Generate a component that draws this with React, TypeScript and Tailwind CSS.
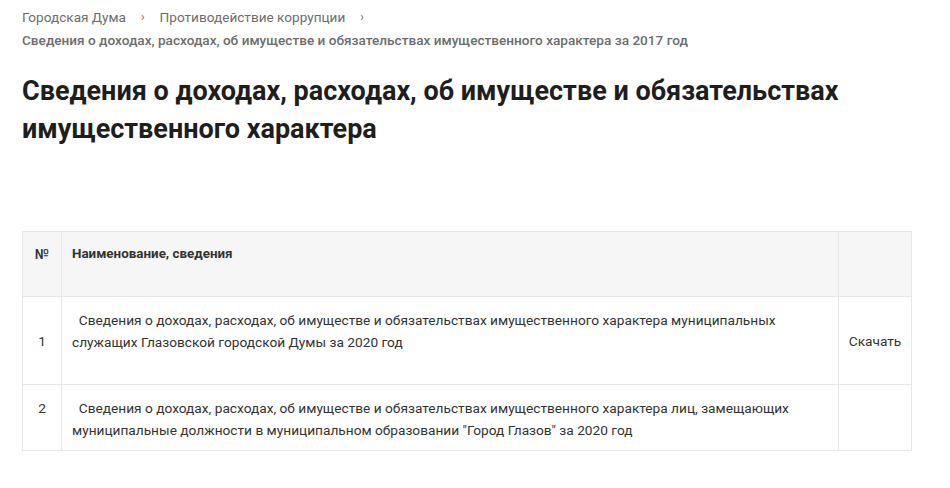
export default function App() {
  return (
    <div className="min-h-[488px] bg-white px-[22px] pt-[6px] text-[#333]" style={{ fontFamily: 'Roboto, "Noto Sans", sans-serif' }}>
      {/* Breadcrumbs */}
      <nav className="text-[13.6px] leading-[23px] text-[#6d6d6d]">
        <div className="flex items-center">
          <span>Городская Дума</span>
          <span className="mx-[15px] text-[12px]">›</span>
          <span>Противодействие коррупции</span>
          <span className="mx-[15px] text-[12px]">›</span>
        </div>
        <div className="font-medium">Сведения о доходах, расходах, об имуществе и обязательствах имущественного характера за 2017 год</div>
      </nav>

      <h1 className="mt-[20px] text-[27px] font-bold leading-[38px] text-[#1e1e1e]">
        Сведения о доходах, расходах, об имуществе и обязательствах
        <br />
        имущественного характера
      </h1>

      <table className="mt-[83px] w-[890px] border-collapse text-[13.7px] leading-[22px]">
        <thead>
          <tr className="h-[65px] bg-[#f6f6f6]">
            <th className="w-[39px] border border-[#e8e8e8] px-[10px] pb-[28px] pt-[11px] text-center align-top text-[14px] font-medium">№</th>
            <th className="border border-[#e8e8e8] px-[10px] pb-[28px] pt-[11px] text-left align-top text-[13.4px] font-bold">Наименование, сведения</th>
            <th className="w-[73px] border border-[#e8e8e8]"></th>
          </tr>
        </thead>
        <tbody>
          <tr className="h-[87px]">
            <td className="border border-[#e8e8e8] text-center align-middle">1</td>
            <td className="border border-[#e8e8e8] px-[10px] pb-[9px] pt-[12px] align-top">
              &nbsp;&nbsp;Сведения о доходах, расходах, об имуществе и обязательствах имущественного характера муниципальных служащих Глазовской городской Думы за 2020 год
              <br />
              &nbsp;
            </td>
            <td className="border border-[#e8e8e8] text-center align-middle">Скачать</td>
          </tr>
          <tr className="h-[65px]">
            <td className="border border-[#e8e8e8] pt-[12px] text-center align-top">2</td>
            <td className="border border-[#e8e8e8] px-[10px] pb-[9px] pt-[12px] align-top">
              &nbsp;&nbsp;Сведения о доходах, расходах, об имуществе и обязательствах имущественного характера лиц, замещающих муниципальные должности в муниципальном образовании "Город Глазов" за 2020 год
            </td>
            <td className="border border-[#e8e8e8]"></td>
          </tr>
        </tbody>
      </table>
    </div>
  );
}
